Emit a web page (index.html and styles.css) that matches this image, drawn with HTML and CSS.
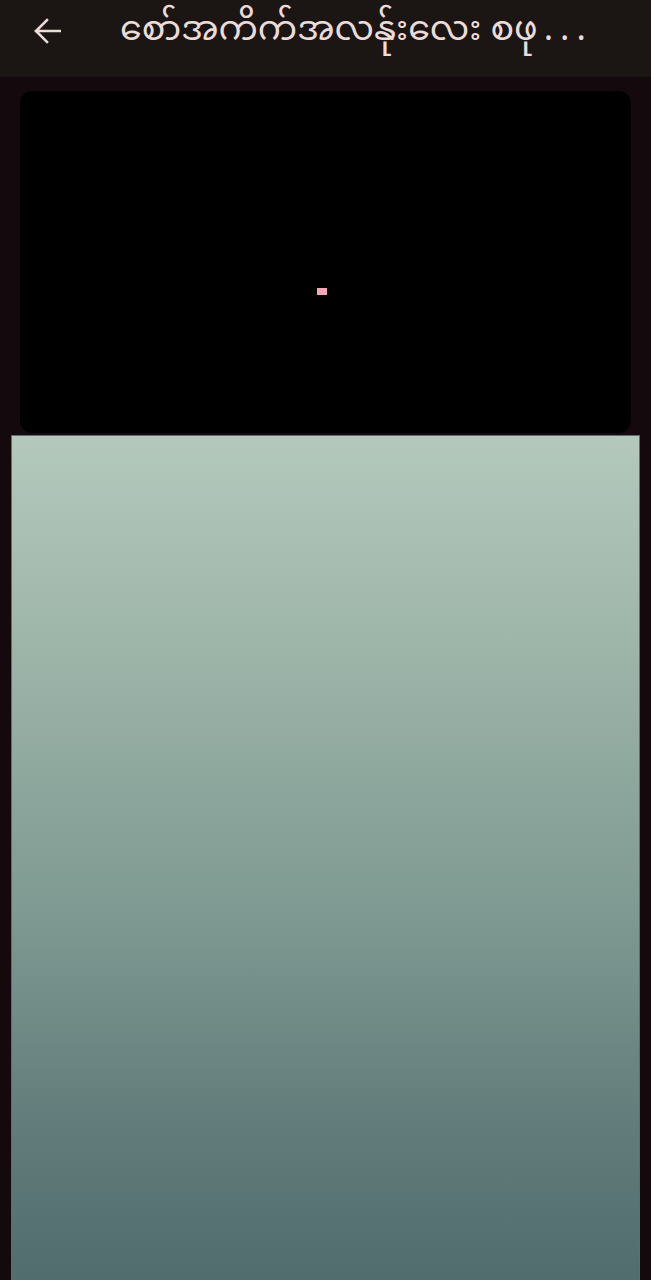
FILE: index.html
```html
<!DOCTYPE html>
<html>
<head>
<meta charset="utf-8">
<link rel="stylesheet" href="styles.css">
</head>
<body>
<header class="topbar">
  <button class="back" aria-label="Back">
    <svg width="28" height="28" viewBox="0 0 28 28"><path d="M27 14H3M14 3L3 14l11 11" fill="none" stroke="#ecdcd8" stroke-width="2.6" stroke-linecap="square"/></svg>
  </button>
  <h1 class="title">စော်အကိက်အလန်ုးလေး စဖု<span class="dots">...</span></h1>
</header>
<main class="content">
  <section class="player">
    <span class="dot"></span>
  </section>
  <section class="panel"></section>
</main>
</body>
</html>
```
FILE: styles.css
```css
html, body {
  margin: 0;
  padding: 0;
  background: #140a0d;
  height: 1280px;
  overflow: hidden;
  font-family: "Noto Sans Myanmar", "Padauk", "Myanmar Text", "Noto Sans", sans-serif;
}
.topbar {
  height: 77px;
  background: #1b1514;
  display: flex;
  align-items: center;
  box-sizing: border-box;
  padding-left: 33px;
}
.back {
  background: none;
  border: 0;
  padding: 0;
  width: 28px;
  height: 28px;
  display: flex;
  flex-shrink: 0;
  margin-top: -15px;
}
.title {
  margin: -12px 0 0 59px;
  color: #ecdcd8;
  font-size: 35px;
  font-weight: 400;
  white-space: nowrap;
  line-height: 1.5;
}
.dots {
  letter-spacing: 7px;
  margin-left: 6px;
}
.content {
  display: flex;
  flex-direction: column;
  align-items: center;
  padding-top: 14px;
}
.player {
  width: 611px;
  height: 342px;
  background: #000;
  border-radius: 12px;
  position: relative;
}
.dot {
  position: absolute;
  left: 297px;
  top: 197px;
  width: 10px;
  height: 7px;
  background: #f2a6b6;
}
.panel {
  margin-top: 2px;
  width: 627px;
  height: 860px;
  border: 1px solid #6a6a6a;
  background: linear-gradient(#b4c9bc 0%, #9db4a9 25%, #7f9a92 55%, #627c7b 80%, #4f6b6c 100%);
}
```
